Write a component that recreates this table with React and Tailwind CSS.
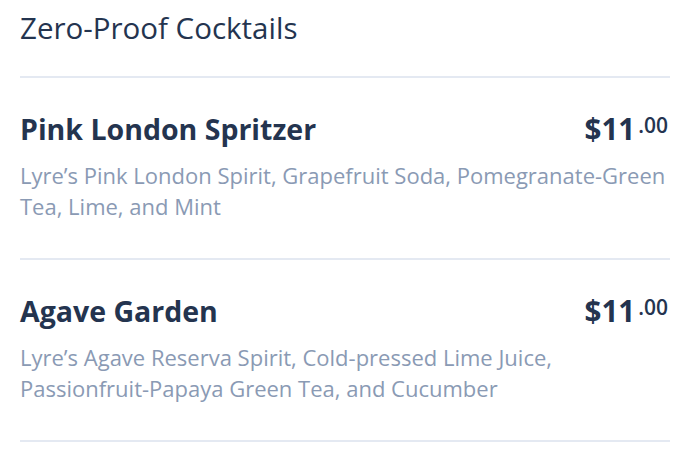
import React from 'react';

const items = [
  {
    name: 'Pink London Spritzer',
    price: '11',
    cents: '00',
    description:
      'Lyre’s Pink London Spirit, Grapefruit Soda, Pomegranate-Green Tea, Lime, and Mint',
  },
  {
    name: 'Agave Garden',
    price: '11',
    cents: '00',
    description:
      'Lyre’s Agave Reserva Spirit, Cold-pressed Lime Juice, Passionfruit-Papaya Green Tea, and Cucumber',
  },
];

function MenuItem({ item }) {
  return (
    <div className="border-b-2 border-[#e4e9f2] pt-[33px] pb-[36px]">
      <div className="flex items-start justify-between">
        <h3 className="text-[28.5px] font-bold leading-[36px] text-[#24344f]">{item.name}</h3>
        <div className="mr-[2px] flex items-start text-[#24344f]">
          <span className="text-[29.5px] font-bold leading-[36px]">${item.price}</span>
          <span className="ml-[3px] text-[21px] font-semibold leading-[28px]">.{item.cents}</span>
        </div>
      </div>
      <p className="mt-[13px] text-[22px] leading-[31px] text-[#8a9ab4]">{item.description}</p>
    </div>
  );
}

export default function App() {
  return (
    <div className="min-h-screen bg-white px-[20px] pr-[30px] font-['Open_Sans','Noto_Sans',sans-serif]">
      <h2 className="border-b-2 border-[#e4e9f2] pt-[8px] pb-[28px] text-[29.5px] leading-[40px] text-[#24344f]">
        Zero-Proof Cocktails
      </h2>
      {items.map((item) => (
        <MenuItem key={item.name} item={item} />
      ))}
    </div>
  );
}
